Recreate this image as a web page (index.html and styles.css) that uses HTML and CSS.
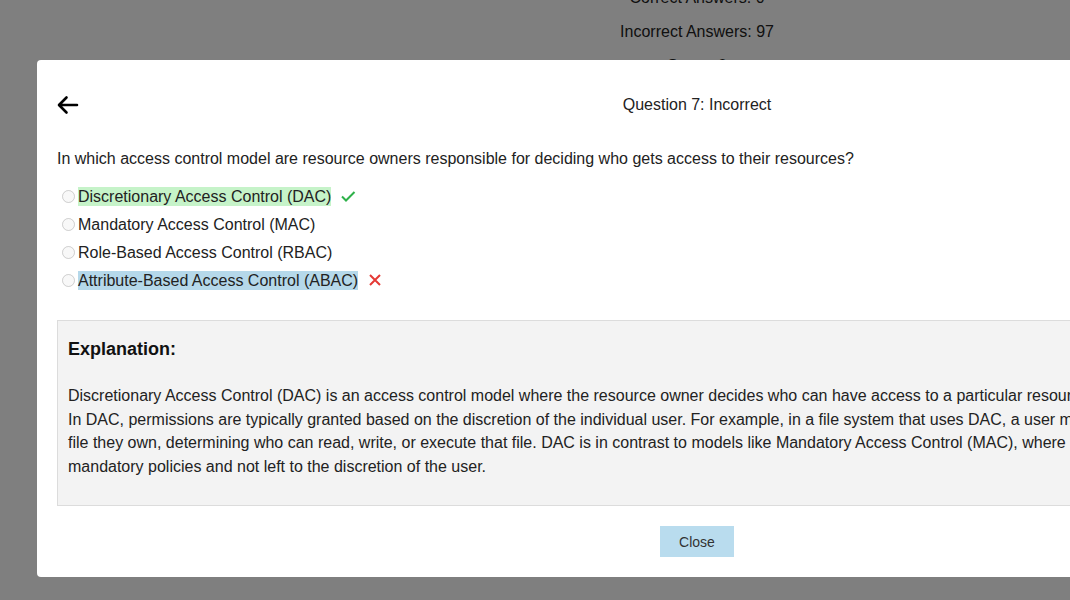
FILE: index.html
```html
<!DOCTYPE html>
<html lang="en">
<head>
    <meta charset="UTF-8">
    <meta name="viewport" content="width=device-width, initial-scale=1.0">
    <title>Quiz Results</title>
    <link rel="stylesheet" href="styles.css">
</head>
<body>
    <div class="results">
        <p>Correct Answers: 0</p>
        <p>Incorrect Answers: 97</p>
        <p>Score: 0</p>
    </div>

    <div class="overlay"></div>

    <div class="modal">
        <div class="modal-header">
            <button class="back-btn" aria-label="Back">
                <svg width="24" height="24" viewBox="0 0 24 24">
                    <path d="M20 12H2.5M9.5 4.5L2 12 9.5 19.5" fill="none" stroke="#000" stroke-width="2.6" stroke-linecap="round" stroke-linejoin="round"/>
                </svg>
            </button>
            <div class="modal-title">Question 7: Incorrect</div>
            <div class="spacer"></div>
        </div>

        <p class="question">In which access control model are resource owners responsible for deciding who gets access to their resources?</p>

        <ul class="options">
            <li>
                <input type="radio" name="q7" disabled>
                <span class="correct">Discretionary Access Control (DAC)</span>
                <svg class="mark" width="16" height="16" viewBox="0 0 16 16">
                    <path d="M2 8.5L6 12.5 14.5 4" fill="none" stroke="#2eb14a" stroke-width="2"/>
                </svg>
            </li>
            <li>
                <input type="radio" name="q7" disabled>
                <span>Mandatory Access Control (MAC)</span>
            </li>
            <li>
                <input type="radio" name="q7" disabled>
                <span>Role-Based Access Control (RBAC)</span>
            </li>
            <li>
                <input type="radio" name="q7" disabled>
                <span class="chosen">Attribute-Based Access Control (ABAC)</span>
                <svg class="mark" width="16" height="16" viewBox="0 0 16 16">
                    <path d="M3 3L13 13M13 3L3 13" fill="none" stroke="#e53935" stroke-width="2"/>
                </svg>
            </li>
        </ul>

        <div class="explanation">
            <h3>Explanation:</h3>
            <p>Discretionary Access Control (DAC) is an access control model where the resource owner decides who can have access to a particular resource.<br>In DAC, permissions are typically granted based on the discretion of the individual user. For example, in a file system that uses DAC, a user may set permissions on a<br>file they own, determining who can read, write, or execute that file. DAC is in contrast to models like Mandatory Access Control (MAC), where access is determined by<br>mandatory policies and not left to the discretion of the user.</p>
        </div>

        <div class="modal-footer">
            <button class="close-btn">Close</button>
        </div>
    </div>
</body>
</html>
```

FILE: styles.css
```css
body {
    margin: 0;
    font-family: 'Liberation Sans', Arial, sans-serif;
    background-color: #fff;
    color: #222;
    overflow: hidden;
    height: 600px;
}
.results {
    width: 1394px;
    text-align: center;
    margin-top: -27px;
    font-size: 16px;
}
.results p {
    margin: 16px 0;
    line-height: 18px;
}
.overlay {
    position: fixed;
    top: 0;
    left: 0;
    right: 0;
    bottom: 0;
    background-color: rgba(0, 0, 0, 0.5);
}
.modal {
    position: absolute;
    left: 37px;
    top: 60px;
    width: 1320px;
    height: 517px;
    box-sizing: border-box;
    padding: 20px;
    background-color: #fff;
    border-radius: 4px;
    display: flex;
    flex-direction: column;
}
.modal-header {
    display: flex;
    align-items: center;
    height: 48px;
    margin-top: 1px;
}
.back-btn {
    background: none;
    border: none;
    padding: 0;
    width: 24px;
    height: 24px;
    cursor: pointer;
}
.back-btn svg {
    display: block;
}
.modal-title {
    flex: 1;
    text-align: center;
    font-size: 16px;
}
.spacer {
    width: 24px;
}
.question {
    margin: 21px 0 14px;
    font-size: 16px;
    line-height: 18px;
}
.options {
    list-style-type: none;
    padding: 0;
    margin: 0;
}
.options li {
    display: flex;
    align-items: center;
    height: 28px;
    font-size: 16px;
}
.options input[type="radio"] {
    margin: 1px 3px 0 5px;
}
.options span {
    line-height: 19px;
}
.correct {
    background-color: #c6f3c9;
}
.chosen {
    background-color: #b5d8ea;
}
.mark {
    margin-left: 9px;
    display: block;
}
.explanation {
    margin-top: 26px;
    background-color: #f3f3f3;
    border: 1px solid #dcdcdc;
    padding: 10px 10px 20px;
    height: 186px;
    box-sizing: border-box;
    white-space: nowrap;
}
.explanation h3 {
    margin: 8px 0 0;
    font-size: 18px;
    line-height: 20px;
    color: #111;
}
.explanation p {
    margin: 25px 0 0;
    font-size: 16px;
    line-height: 23.5px;
}
.modal-footer {
    display: flex;
    justify-content: center;
    margin-top: 20px;
}
.close-btn {
    background-color: #b9dcee;
    border: none;
    width: 74px;
    height: 31px;
    font-family: 'Liberation Sans', Arial, sans-serif;
    font-size: 14px;
    color: #333;
    cursor: pointer;
}
```
